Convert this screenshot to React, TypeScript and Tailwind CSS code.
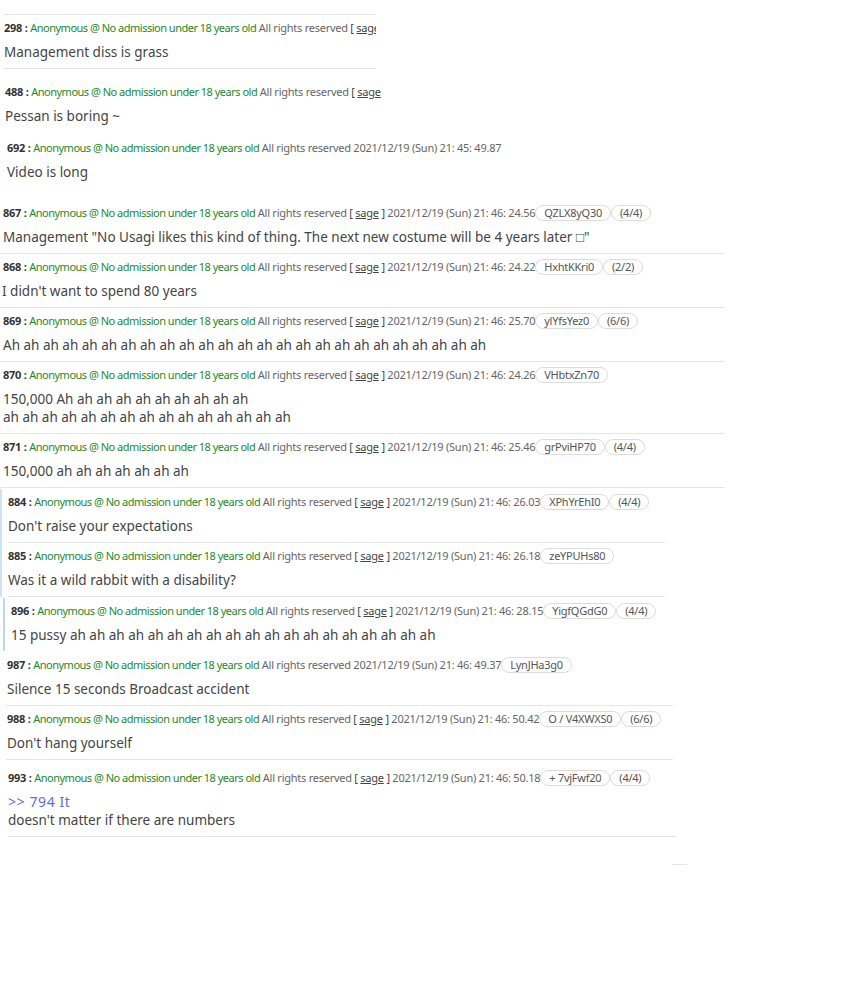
import React from "react";

type Post = {
  no: string;
  sage?: boolean;
  date: string;
  id?: string;
  count?: string;
  body: React.ReactNode;
};

const font = { fontFamily: '"Noto Sans", "Open Sans", sans-serif' };

const Header: React.FC<{ p: Post }> = ({ p }) => (
  <div className="h-[14px] leading-[14px] text-[11px] whitespace-nowrap tracking-[-0.25px] text-[#666] flex items-center">
    <span className="font-bold text-[#333]">{p.no}</span>
    <span className="font-bold text-[#333]">&nbsp;:&nbsp;</span>
    <span className="text-[#1c8a2a] tracking-[-0.5px]">Anonymous @ No admission under 18 years old</span>
    <span>&nbsp;All rights reserved&nbsp;</span>
    {p.sage && (
      <span className="text-[#444]">
        [ <span className="underline">sage</span> ]&nbsp;
      </span>
    )}
    <span>{p.date}</span>
    {p.id && (
      <span className="border border-[#dcdcdc] rounded-full px-[8px] h-[16px] leading-[14px] text-[#555]">
        {p.id}
      </span>
    )}
    {p.count && (
      <span className="border border-[#dcdcdc] rounded-full px-[8px] h-[16px] leading-[14px] text-[#555]">
        {p.count}
      </span>
    )}
  </div>
);

const Row: React.FC<{ p: Post; className?: string; line?: boolean }> = ({
  p,
  className = "",
  line = true,
}) => (
  <div
    className={
      "pt-[6px] pb-[7px] " + (line ? "border-b border-[#e6e6e6] " : "") + className
    }
  >
    <Header p={p} />
    <div className="mt-[8px] text-[13.5px] leading-[18px] text-[#444] whitespace-nowrap">
      {p.body}
    </div>
  </div>
);

const D = "2021/12/19 (Sun) 21: 46: ";

export default function App() {
  return (
    <div className="bg-white w-[864px] min-h-[1000px] pt-[14px]" style={font}>
      {/* clipped top block */}
      <div className="ml-[3px] w-[373px] overflow-hidden border-t border-[#e6e6e6]">
        <Row
          className="pl-[1px]"
          p={{ no: "298", sage: true, date: D + "24.00", body: "Management diss is grass" }}
        />
      </div>
      <div className="mt-[10px] ml-[4px] w-[377px] overflow-hidden">
        <Row
          line={false}
          className="pl-[1px]"
          p={{ no: "488", sage: true, date: D + "24.00", body: "Pessan is boring ~" }}
        />
      </div>
      <div className="ml-[7px] mt-[3px]">
        <Row
          line={false}
          p={{ no: "692", date: "2021/12/19 (Sun) 21: 45: 49.87", body: "Video is long" }}
        />
      </div>

      <div className="w-[725px] mt-[12px]">
        <Row
          className="pl-[3px]"
          p={{
            no: "867",
            sage: true,
            date: D + "24.56",
            id: "QZLX8yQ30",
            count: "(4/4)",
            body: 'Management "No Usagi likes this kind of thing. The next new costume will be 4 years later \u25A1"',
          }}
        />
        <Row
          className="pl-[3px]"
          p={{
            no: "868",
            sage: true,
            date: D + "24.22",
            id: "HxhtKKri0",
            count: "(2/2)",
            body: <span className="-ml-[1px]">I didn't want to spend 80 years</span>,
          }}
        />
        <Row
          className="pl-[3px]"
          p={{
            no: "869",
            sage: true,
            date: D + "25.70",
            id: "ylYfsYez0",
            count: "(6/6)",
            body: "Ah ah ah ah ah ah ah ah ah ah ah ah ah ah ah ah ah ah ah ah ah ah ah ah ah",
          }}
        />
        <Row
          className="pl-[3px]"
          p={{
            no: "870",
            sage: true,
            date: D + "24.26",
            id: "VHbtxZn70",
            body: (
              <>
                150,000 Ah ah ah ah ah ah ah ah ah ah
                <br />
                ah ah ah ah ah ah ah ah ah ah ah ah ah ah ah
              </>
            ),
          }}
        />
        <Row
          className="pl-[3px]"
          p={{
            no: "871",
            sage: true,
            date: D + "25.46",
            id: "grPviHP70",
            count: "(4/4)",
            body: "150,000 ah ah ah ah ah ah ah",
          }}
        />
      </div>

      {/* quoted group */}
      <div className="mt-[1px] border-l-2 border-[#cfe3f8] pl-[6px] w-[665px]">
        <Row
          p={{
            no: "884",
            sage: true,
            date: D + "26.03",
            id: "XPhYrEhI0",
            count: "(4/4)",
            body: "Don't raise your expectations",
          }}
        />
        <Row
          p={{
            no: "885",
            sage: true,
            date: D + "26.18",
            id: "zeYPUHs80",
            body: "Was it a wild rabbit with a disability?",
          }}
        />
      </div>
      <div className="ml-[3px] mt-[1px] border-l-2 border-[#b9d6f6] pl-[6px] w-[662px]">
        <Row
          line={false}
          className="pb-[4px]"
          p={{
            no: "896",
            sage: true,
            date: D + "28.15",
            id: "YigfQGdG0",
            count: "(4/4)",
            body: "15 pussy ah ah ah ah ah ah ah ah ah ah ah ah ah ah ah ah ah ah ah",
          }}
        />
      </div>

      <div className="ml-[6px] w-[667px] mt-[1px]">
        <Row
          className="pl-[1px]"
          p={{
            no: "987",
            date: "2021/12/19 (Sun) 21: 46: 49.37",
            id: "LynJHa3g0",
            body: "Silence 15 seconds Broadcast accident",
          }}
        />
        <Row
          className="pl-[1px]"
          p={{
            no: "988",
            sage: true,
            date: D + "50.42",
            id: "O / V4XWXS0",
            count: "(6/6)",
            body: "Don't hang yourself",
          }}
        />
      </div>
      <div className="ml-[8px] w-[668px] pt-[5px]">
        <Row
          className="pb-[4px]"
          p={{
            no: "993",
            sage: true,
            date: D + "50.18",
            id: "+ 7vjFwf20",
            count: "(4/4)",
            body: (
              <>
                <span className="text-[#5b6ee6] text-[14px] tracking-[0.6px]">
                  &gt;&gt; 794 It
                </span>
                <br />
                doesn't matter if there are numbers
              </>
            ),
          }}
        />
      </div>
      <div className="ml-[672px] mt-[27px] w-[15px] border-t border-[#e6e6e6]" />
    </div>
  );
}
